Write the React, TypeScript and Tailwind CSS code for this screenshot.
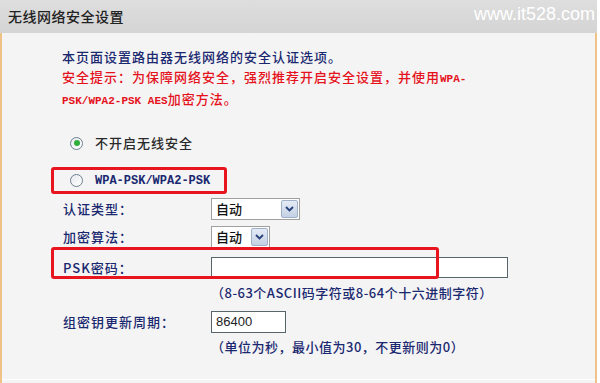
import React from 'react';

const navy = 'text-[#1a2870]';

const Radio: React.FC<{ checked?: boolean }> = ({ checked }) => (
  <span className="w-[13px] h-[13px] rounded-full border border-[#6f7f90] bg-gradient-to-br from-[#e6e9ee] to-white flex items-center justify-center shrink-0">
    {checked && <span className="w-[6px] h-[6px] rounded-full bg-[#2fae3a]" />}
  </span>
);

const Select: React.FC<{ width: string }> = ({ width }) => (
  <div className={`${width} h-[22px] bg-white border border-[#a0a0a0] flex items-center justify-between pl-[4px] pr-[1px]`}>
    <span className="text-[13px] font-medium text-[#111]">自动</span>
    <span className="w-[17px] h-[18px] border border-[#9fb0c8] rounded-[2px] bg-gradient-to-b from-[#e4ebf5] to-[#c4d1e4] flex items-center justify-center">
      <svg width="9" height="6" viewBox="0 0 9 6">
        <path d="M1 1 L4.5 4.5 L8 1" fill="none" stroke="#26407a" strokeWidth="1.8" />
      </svg>
    </span>
  </div>
);

const Row: React.FC<{ label: string; className?: string; children: React.ReactNode }> = ({ label, className = '', children }) => (
  <div className={`flex items-center pl-[61px] ${className}`}>
    <span className={`w-[148px] text-[13px] font-medium tracking-[1px] ${navy}`}>{label}</span>
    {children}
  </div>
);

export default function App() {
  return (
    <div className="w-[600px] h-[383px] overflow-hidden bg-white flex flex-col font-['Noto_Sans_CJK_SC',sans-serif]">
      <header className="h-[33px] mr-[3px] bg-gradient-to-b from-[#dedede] to-[#d4d4d4] flex items-center justify-between pl-[8px] pr-[2px]">
        <span className="text-[14px] font-medium tracking-[0.5px] text-[#222]">无线网络安全设置</span>
        <span className="self-start mt-[1px] text-[18px] text-white font-['Liberation_Sans',sans-serif]">www.it528.com</span>
      </header>

      <div className="relative flex-1 mr-[3px] border-l-2 border-r-2 border-[#efc288] bg-[#f4f4f4] pt-[14px]">
        <div className="pl-[60px] text-[13px] font-medium tracking-[1px] leading-[20px]">
          <p className={navy}>本页面设置路由器无线网络的安全认证选项。</p>
          <p className="text-[#e5121c]">
            安全提示：为保障网络安全，强烈推荐开启安全设置，并使用<span className="font-['Liberation_Mono',monospace] font-bold text-[11px] tracking-normal">WPA-</span>
          </p>
          <p className="text-[#e5121c]">
            <span className="font-['Liberation_Mono',monospace] font-bold text-[11px] tracking-normal">PSK/WPA2-PSK AES</span>加密方法。
          </p>
        </div>

        <div className="mt-[21px] h-[22px] pl-[68px] flex items-center gap-[12px]">
          <Radio checked />
          <span className="text-[13px] font-medium tracking-[1px] text-[#2a2a2a]">不开启无线安全</span>
        </div>

        <div className="mt-[13px] ml-[49px] w-[176px] h-[27px] border-[3px] border-[#e8141e] rounded-[3px] flex items-center pl-[16px] gap-[12px]">
          <Radio />
          <span className={`font-['Liberation_Mono',monospace] font-bold text-[12px] ${navy}`}>WPA-PSK/WPA2-PSK</span>
        </div>

        <Row label="认证类型：" className="mt-[4px] h-[22px]">
          <Select width="w-[89px]" />
        </Row>
        <Row label="加密算法：" className="mt-[6px] h-[22px]">
          <Select width="w-[59px]" />
        </Row>
        <Row label="PSK密码：" className="mt-[9px] h-[21px]">
          <div className="w-[297px] h-[21px] bg-white border border-[#56666a]" />
        </Row>
        <div className={`mt-[5px] h-[20px] pl-[209px] text-[13px] font-medium tracking-[0.5px] leading-[20px] ${navy}`}>
          （8-63个ASCII码字符或8-64个十六进制字符）
        </div>
        <Row label="组密钥更新周期：" className="mt-[8px] h-[22px]">
          <div className="w-[75px] h-[22px] bg-white border border-[#56666a] flex items-center pl-[4px] text-[13px] text-[#222] font-['Liberation_Sans',sans-serif]">
            86400
          </div>
        </Row>
        <div className={`mt-[4px] h-[20px] pl-[209px] text-[13px] font-medium tracking-[0.5px] leading-[20px] ${navy}`}>
          （单位为秒，最小值为30，不更新则为0）
        </div>

        <div className="absolute left-[49px] top-[214px] w-[388px] h-[32px] border-[3px] border-[#e8141e] rounded-[3px]" />
        <div className="absolute left-0 right-0 top-[346px] h-[1px] bg-white" />
      </div>
    </div>
  );
}
